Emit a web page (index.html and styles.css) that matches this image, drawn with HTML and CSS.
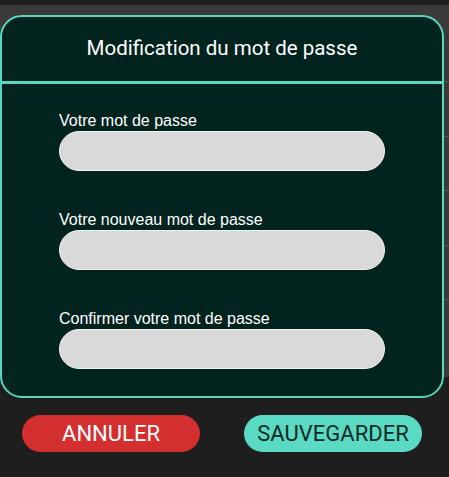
FILE: index.html
```html
<!DOCTYPE html>
<html lang="fr">
<head>
<meta charset="utf-8">
<title>Modification du mot de passe</title>
<link rel="stylesheet" href="styles.css">
</head>
<body>
<div class="page">
  <div class="backdrop">
    <div class="row row-head"></div>
    <div class="row"></div>
    <div class="row"></div>
    <div class="row"></div>
    <div class="row"></div>
  </div>

  <div class="modal">
    <div class="modal-header">Modification du mot de passe</div>
    <div class="modal-body">
      <label class="field">
        <span class="label">Votre mot de passe</span>
        <input class="input" type="password">
      </label>
      <label class="field">
        <span class="label">Votre nouveau mot de passe</span>
        <input class="input" type="password">
      </label>
      <label class="field">
        <span class="label">Confirmer votre mot de passe</span>
        <input class="input" type="password">
      </label>
    </div>
  </div>

  <div class="actions">
    <button class="btn btn-cancel">ANNULER</button>
    <button class="btn btn-save">SAUVEGARDER</button>
  </div>
</div>
</body>
</html>
```

FILE: styles.css
```css
* { box-sizing: border-box; }

html, body {
  margin: 0;
  padding: 0;
}

body {
  background: #1e1e1e;
  width: 449px;
  height: 477px;
  overflow: hidden;
  font-family: "Liberation Sans", Arial, sans-serif;
}

.page {
  position: relative;
  padding-top: 5px;
}

.backdrop {
  height: 372px;
  background: #3a3a3a;
  display: flex;
  flex-direction: column;
}

.row {
  height: 54.5px;
  border-bottom: 1px solid #555;
}

.row-head {
  height: 77px;
}

.modal {
  position: absolute;
  left: 0;
  top: 15px;
  width: 444px;
  height: 383px;
  background: #02231e;
  border: 2px solid #5bd6be;
  border-radius: 22px;
  display: flex;
  flex-direction: column;
}

.modal-header {
  height: 67px;
  border-bottom: 3px solid #5bd6be;
  display: flex;
  align-items: center;
  justify-content: center;
  font-family: Roboto, sans-serif;
  font-size: 20.5px;
  color: #ffffff;
  padding-bottom: 2px;
}

.modal-body {
  padding: 28px 57px 0 57px;
  display: flex;
  flex-direction: column;
  gap: 40px;
}

.field {
  display: flex;
  flex-direction: column;
  gap: 1px;
}

.label {
  font-family: "Liberation Sans", Arial, sans-serif;
  font-size: 16px;
  line-height: 18px;
  color: #ffffff;
}

.input {
  width: 326px;
  height: 40px;
  margin: 0;
  background: #d9d9d9;
  border: 1px solid #f2f2f2;
  border-radius: 20px;
  outline: none;
  padding: 0 16px;
}

.actions {
  margin-top: 38px;
  padding: 0 27px 0 22px;
  display: flex;
  justify-content: space-between;
}

.btn {
  width: 178px;
  height: 37px;
  border: none;
  border-radius: 19px;
  font-family: Roboto, sans-serif;
  font-size: 22px;
  padding: 0;
  display: flex;
  align-items: center;
  justify-content: center;
}

.btn-cancel {
  background: #d32f2f;
  color: #ffffff;
}

.btn-save {
  background: #5ad9c3;
  color: #0e2a25;
}
```
